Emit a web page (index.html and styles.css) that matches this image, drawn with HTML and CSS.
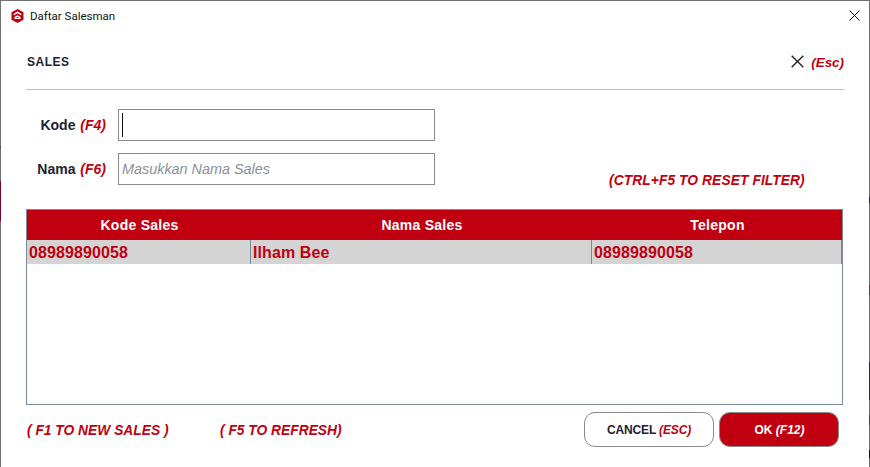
FILE: index.html
```html
<!DOCTYPE html>
<html lang="en">
<head>
    <meta charset="UTF-8">
    <title>Daftar Salesman</title>
    <link rel="stylesheet" href="styles.css">
</head>
<body>
    <div class="window">
        <span class="edge left-a"></span>
        <span class="edge left-b"></span>
        <span class="edge right-a"></span>
        <span class="edge right-b"></span>
        <span class="edge right-c"></span>
        <span class="edge right-d"></span>
        <span class="edge right-e"></span>

        <div class="titlebar">
            <svg class="app-icon" width="13" height="14" viewBox="0 0 13 14">
                <path fill="#c00010" d="M6.500 0L12.500 3.200V10.800L6.500 14L.5 10.800V3.200z"/>
                <path fill="#fff" d="M6.500 2.600l3.800 2.100v1.700L6.500 4.300 2.700 6.400V4.700z"/>
                <path fill="#fff" d="M6.500 6.200l3 1.700v2H3.500v-2z"/>
                <path fill="#c00010" d="M6.500 7.800L8 9H5z"/>
            </svg>
            <span class="title">Daftar Salesman</span>
            <svg class="close-icon" width="11" height="11" viewBox="0 0 11 11">
                <path d="M.5.500l10 10M10.500.500l-10 10" stroke="#111" stroke-width="1" fill="none"/>
            </svg>
        </div>

        <div class="content">
            <div class="header">
                <span class="header-title">SALES</span>
                <div class="header-close">
                    <svg class="header-x" width="13" height="13" viewBox="0 0 13 13">
                        <path d="M.7.700l11.600 11.600M12.300.700L.7 12.300" stroke="#222" stroke-width="1.400" fill="none"/>
                    </svg>
                    <span class="hint esc">(Esc)</span>
                </div>
            </div>

            <div class="filter">
                <div class="fields">
                    <div class="field">
                        <label class="field-label">Kode <em>(F4)</em></label>
                        <div class="input"><span class="caret"></span></div>
                    </div>
                    <div class="field">
                        <label class="field-label">Nama <em>(F6)</em></label>
                        <div class="input placeholder">Masukkan Nama Sales</div>
                    </div>
                </div>
                <span class="hint reset">(CTRL+F5 TO RESET FILTER)</span>
            </div>

            <div class="table">
                <div class="row head">
                    <div class="cell c1">Kode Sales</div>
                    <div class="cell c2">Nama Sales</div>
                    <div class="cell c3">Telepon</div>
                </div>
                <div class="row selected">
                    <div class="cell c1">08989890058</div>
                    <div class="cell c2">Ilham Bee</div>
                    <div class="cell c3">08989890058</div>
                </div>
            </div>

            <div class="footer">
                <span class="hint new">( F1 TO NEW SALES )</span>
                <span class="hint refresh">( F5 TO REFRESH)</span>
                <div class="buttons">
                    <button class="btn cancel">CANCEL <em>(ESC)</em></button>
                    <button class="btn ok">OK <em>(F12)</em></button>
                </div>
            </div>
        </div>
    </div>
</body>
</html>
```

FILE: styles.css
```css
html, body {
    margin: 0;
    padding: 0;
}
body {
    width: 870px;
    height: 467px;
    overflow: hidden;
    background: #fff;
    font-family: "Liberation Sans", Arial, sans-serif;
}
.window {
    box-sizing: border-box;
    position: relative;
    width: 870px;
    height: 467px;
    border-top: 1px solid #707070;
    border-left: 1px solid #707070;
    border-right: 1px solid #707070;
    background: #fff;
}

/* bits of other windows showing through the border */
.edge {
    position: absolute;
    width: 1px;
    background: #2a2060;
}
.left-a {
    left: -1px;
    top: 146px;
    height: 1px;
    background: #7a0030;
}
.left-b {
    left: -1px;
    top: 180px;
    height: 40px;
    background: #7a0030;
}
.right-a {
    right: -1px;
    top: 196px;
    height: 6px;
}
.right-b {
    right: -1px;
    top: 284px;
    height: 10px;
    background: #5a3a3a;
}
.right-c {
    right: -1px;
    top: 361px;
    height: 38px;
}
.right-d {
    right: -1px;
    top: 414px;
    height: 10px;
    background: #404040;
}
.right-e {
    right: -1px;
    top: 449px;
    height: 8px;
    background: #111;
}

.titlebar {
    display: flex;
    align-items: center;
    height: 30px;
    padding-left: 10px;
    padding-right: 9px;
}
.app-icon {
    margin-bottom: 1px;
}
.title {
    margin-left: 6px;
    font-family: Roboto, sans-serif;
    font-size: 11.5px;
    color: #111;
}
.close-icon {
    margin-left: auto;
    margin-bottom: 2px;
}
.content {
    padding: 0 25px;
}
.header {
    box-sizing: border-box;
    display: flex;
    justify-content: space-between;
    align-items: center;
    height: 59px;
    padding-top: 4px;
    border-bottom: 1px solid #bdbdbd;
}
.header-title {
    margin-left: 1px;
    font-size: 12px;
    font-weight: bold;
    color: #1c2233;
    letter-spacing: 0.5px;
}
.header-close {
    display: flex;
    align-items: center;
    gap: 7px;
}
.header-x {
    margin-bottom: 2px;
}
.hint {
    color: #c00010;
    font-size: 13.8px;
    font-weight: bold;
    font-style: italic;
}
.esc {
    font-size: 13.4px;
}
.filter {
    display: flex;
    height: 119px;
}
.fields {
    padding-top: 19px;
}
.field {
    display: flex;
    align-items: center;
    height: 32px;
    margin-bottom: 12px;
}
.field-label {
    width: 80px;
    text-align: right;
    font-size: 14px;
    font-weight: bold;
    color: #1c2233;
}
.field-label em {
    color: #c00010;
    margin-left: 1px;
}
.input {
    box-sizing: border-box;
    display: flex;
    align-items: center;
    width: 317px;
    height: 32px;
    margin-left: 12px;
    padding-left: 3px;
    border: 1px solid #8a8a8a;
    background: #fff;
}
.caret {
    width: 1px;
    height: 24px;
    background: #111;
}
.placeholder {
    font-size: 14.4px;
    font-style: italic;
    color: #8a8f96;
}
.reset {
    margin-left: 174px;
    margin-top: 83px;
    height: 16px;
    letter-spacing: 0.08px;
}
.table {
    box-sizing: border-box;
    width: 817px;
    height: 196px;
    border: 1px solid #7a8a9a;
}
.row {
    display: flex;
}
.head {
    height: 30px;
    background: #c00010;
    color: #fff;
    font-size: 14px;
    font-weight: bold;
    letter-spacing: 0.25px;
}
.head .cell {
    justify-content: center;
    padding-left: 1px;
}
.selected {
    height: 24px;
    background: #d4d4d4;
    color: #c00010;
    font-size: 16px;
    font-weight: bold;
    letter-spacing: 0.1px;
}
.selected .cell {
    padding-left: 2px;
    padding-top: 1px;
    border-right: 1px solid #7a8a9a;
}
.cell {
    box-sizing: border-box;
    display: flex;
    align-items: center;
}
.c1 {
    width: 224px;
}
.c2 {
    width: 341px;
}
.c3 {
    width: 250px;
}
.footer {
    display: flex;
    align-items: center;
    margin-top: 7px;
}
.new {
    margin-left: 1px;
    width: 193px;
    padding-top: 2px;
}
.refresh {
    padding-top: 2px;
}
.buttons {
    display: flex;
    gap: 5px;
    margin-left: auto;
    margin-right: 5px;
}
.btn {
    box-sizing: border-box;
    height: 35px;
    border-radius: 11px;
    border: 1px solid #8a8a8a;
    font-family: "Liberation Sans", Arial, sans-serif;
    font-size: 12px;
    font-weight: bold;
    padding: 0;
}
.cancel {
    width: 130px;
    background: #fff;
    color: #1c2233;
    letter-spacing: -0.15px;
}
.cancel em {
    color: #c00010;
}
.ok {
    width: 120px;
    padding-left: 1px;
    background: #c00010;
    color: #fff;
}
```
